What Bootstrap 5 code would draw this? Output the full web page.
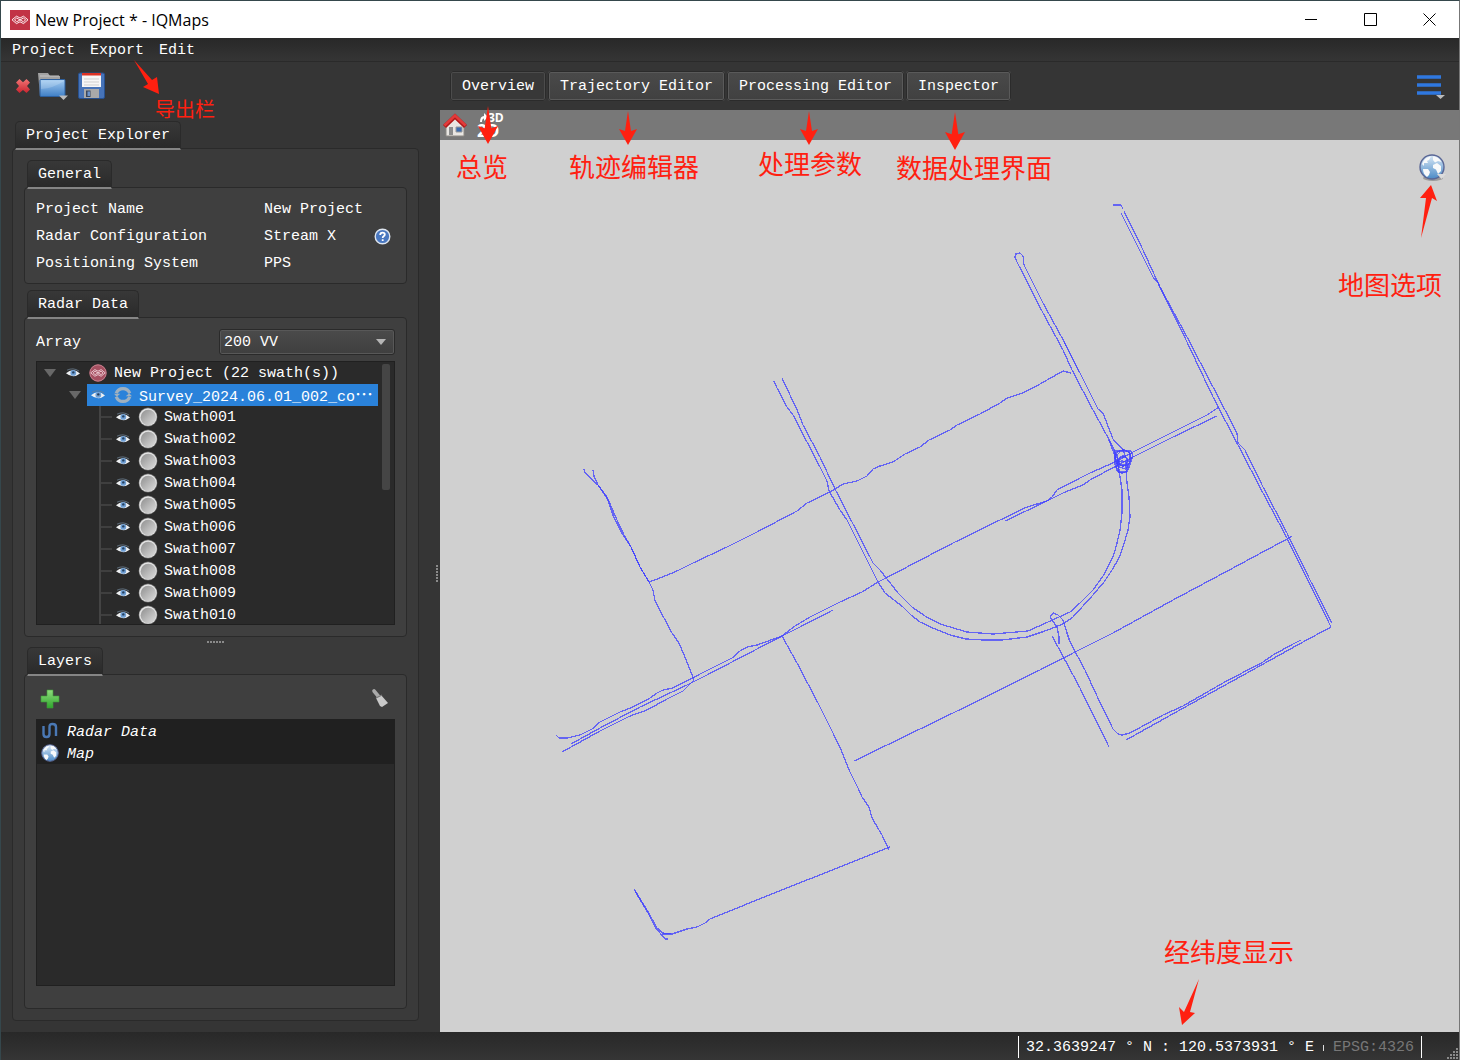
<!DOCTYPE html>
<html lang="en">
<head>
<meta charset="utf-8">
<meta name="viewport" content="width=device-width, initial-scale=1">
<title>New Project * - IQMaps</title>
<link rel="stylesheet" href="https://cdn.jsdelivr.net/npm/bootstrap@5.3.0/dist/css/bootstrap.min.css">
<style>
:root{--edge:#2a2a2a;--ink:#fff;--hot:#ff2010}
body{font-family:"Liberation Mono","Noto Sans CJK SC",monospace;font-size:15px;line-height:22px;color:var(--ink);background:#353535}
button{font:inherit;color:inherit;background:none;border:0;padding:0}
svg{display:block;flex:none}
.app-window{min-height:100vh;border:1px solid #35474c;border-bottom:0;border-right-color:#777}
.title-strip{height:37px;background:#fff;color:#000;font-family:"Open Sans","Noto Sans",sans-serif;font-size:16px;padding-left:9px;gap:5px}
.title-strip button{width:59px;height:37px;display:flex;align-items:center;justify-content:center}
.title-buttons{gap:0}
.menu-strip{height:24px;padding:2px 0 0 11px;gap:15px;background:linear-gradient(#282828,#353535);border-bottom:1px solid #2a2a2a}
.menu-strip a{color:var(--ink);text-decoration:none}
.side-col{width:439px;padding:0 21px 11px 11px}
.tool-strip{height:48px;margin-bottom:11px}
.dock-tab{height:29px;padding:2px 10px 0;margin:0 0 -2px 3px;border:1px solid var(--edge);border-bottom:2px solid #858585;border-radius:5px 5px 0 0;background:linear-gradient(#383838,#2a2a2a);align-self:flex-start;position:relative}
.dock-panel{border:1px solid var(--edge);border-radius:4px;background:#3a3a3a;padding:11px}
.inner-panel{border:1px solid var(--edge);border-radius:4px;background:#3f3f3f;padding:11px}
.info-grid{padding:8px 11px 6px;line-height:27px;margin-bottom:6px}
.info-grid dt{width:228px;font-weight:400}
.info-grid dd{margin:0}
.array-pick{width:176px;position:relative}
.array-pick .form-select{height:26px;padding:2px 4px 0;font:inherit;line-height:22px;color:#fff;background:linear-gradient(#4b4b4b,#3f3f3f);border:1px solid #2a2a2a;border-radius:3px;box-shadow:inset 0 0 0 1px #585858}
.array-pick::after{content:"";position:absolute;right:9px;top:10px;border:5px solid transparent;border-top:6px solid #b5b5b5;border-bottom:0;pointer-events:none}
.array-row label{padding-top:2px}
.swath-tree{height:264px;margin-top:6px;border:1px solid #202020;background:#2a2a2a;overflow:hidden;position:relative}
.swath-tree ul{list-style:none;padding:0}
.tree-row{height:22px;display:flex;align-items:center;white-space:nowrap}
.tree-row .node-name{padding-top:2px}
.tree-row .fold{width:25px;height:22px;display:flex;align-items:center;justify-content:center}
.fold::before{content:"";border:6px solid transparent;border-top:8px solid #686868;border-bottom:0}
.tree-row .eye{width:22px;height:22px;display:flex;align-items:center;justify-content:center}
.tree-row .node-icon{width:28px;margin-right:2px;display:flex;justify-content:center}
.lv-two{margin-left:25px}
.picked{background:#2a82da;width:291px;height:22px;display:flex;align-items:center}
.wide-dots{font-family:"Noto Sans CJK SC",sans-serif;font-size:18px;line-height:18px}
.swath-tree .lv-three{margin:0 0 0 62px}
.lv-three .tree-row{border-left:2px solid #444}
.lv-three .tree-row::before{content:"";width:11px;height:2px;background:#3f3f3f}
.scroll-thumb{position:absolute;right:4px;top:2px;width:8px;height:126px;border-radius:2px;background:#454545}
.grip-h{width:18px;height:10px;margin:0 auto;padding-top:4px}
.grip-h::before{content:"";display:block;height:2px;background:repeating-linear-gradient(90deg,#8a8a8a 0 2px,transparent 2px 3px)}
.grip-v{position:absolute;right:2px;top:503px;width:2px;height:18px;background:repeating-linear-gradient(#8a8a8a 0 2px,transparent 2px 3px)}
.layer-box{border:1px solid #202020;background:#2a2a2a;margin-bottom:11px}
.layer-box li{height:22px;background:#202020;font-style:italic;padding-left:4px;gap:8px}
.view-tabs{height:48px;padding:0 13px 0 10px;gap:2px}
.view-tabs .btn-view{height:30px;padding:1px 12px 0;border-radius:3px;background:linear-gradient(#4a4a4a,#404040);outline:1px solid #2b2b2b;outline-offset:-1px;box-shadow:inset 0 0 0 2px #5a5a5a}
.view-tabs .btn-view.active{background:#383838;box-shadow:inset 0 0 0 2px #4c4c4c}
.view-tools{height:30px;background:#787878;padding-left:2px;gap:9px}
.view-tools svg{overflow:visible}
.map-area{background:#d0d0d0;min-height:600px;position:relative}
.map-area>svg.map-canvas{position:absolute;inset:0;width:100%;height:100%}
.swath-line{fill:none;stroke:#4040ff;stroke-width:1.3;stroke-opacity:.75;shape-rendering:crispEdges}
.globe-btn{position:absolute;right:12px;top:12px}
.status-strip{height:28px;background:linear-gradient(#282828,#353535);padding:2px 37px 0 0;position:relative}
.status-cell{border-left:1px solid #fff;border-right:1px solid #fff;height:22px;padding:2px 7px 0;gap:9px}
.status-tick{width:1px;height:6px;background:#ddd}
.status-epsg{color:#777}
.size-grip{position:absolute;right:0;bottom:0}
.note-label{position:absolute;color:var(--hot);font-family:"Noto Sans CJK SC",sans-serif;font-size:26px;line-height:32px;white-space:nowrap;pointer-events:none;z-index:3}
.note-small{font-size:20px;line-height:24px}
.note-arrow{position:absolute;fill:var(--hot);pointer-events:none;z-index:3}
.arrow-export{left:132px;top:22px}
.arrow-map{right:19px;top:44px}
.arrow-coords{right:258px;bottom:6px}
</style>
<script src="https://cdn.jsdelivr.net/npm/bootstrap@5.3.0/dist/js/bootstrap.bundle.min.js"></script>
</head>
<body>
<svg width="0" height="0" class="position-absolute" aria-hidden="true">
<defs>
<linearGradient id="gGrey" x2="1" y2="1"><stop stop-color="#8e8e8e"/><stop offset="1" stop-color="#dedede"/></linearGradient>
<linearGradient id="gBlue" x2="0" y2="1"><stop stop-color="#a5cdf2"/><stop offset="1" stop-color="#3f7fc6"/></linearGradient>
<linearGradient id="gGlobe" x2="0" y2="1"><stop stop-color="#dbe9f6"/><stop offset="1" stop-color="#4a8ac6"/></linearGradient>
<linearGradient id="gRed" x2="0" y2="1"><stop stop-color="#f27474"/><stop offset="1" stop-color="#c8242f"/></linearGradient>
<linearGradient id="gGreen" x2="0" y2="1"><stop stop-color="#8fdc7d"/><stop offset="1" stop-color="#2fa62d"/></linearGradient>
<symbol id="eye" viewBox="0 0 14 10"><path d="M1 2.2Q7-.8 13 3" fill="none" stroke="#6c7f90" stroke-width=".8"/><path d="M0 5.200Q7-1 14 5.400 7 11 0 5.200Z" fill="#eef0f2"/><circle cx="7.300" cy="4.900" r="2.900" fill="#6f9fd4"/><circle cx="7.300" cy="4.400" r="1.200" fill="#26415f"/></symbol>
<symbol id="disc" viewBox="0 0 20 20"><circle cx="10" cy="10" r="9.400" fill="#6f6f6f"/><circle cx="10" cy="10" r="8.800" fill="#e4e4e4"/><circle cx="10.300" cy="10.500" r="7.700" fill="url(#gGrey)"/></symbol>
<symbol id="knot" viewBox="0 0 20 20"><g fill="none" stroke="currentColor" stroke-width=".9"><path d="M2 9.800 6.500 6.200 10 8 13.500 6.200 18 9.800 13.500 13.600 10 11.800 6.500 13.600ZM4.500 9.800 6.700 8 13.500 11.800 15.600 9.800 13.400 8 6.700 11.800Z"/></g></symbol>
<symbol id="globe" viewBox="0 0 26 26"><circle cx="13" cy="13" r="12" fill="url(#gGlobe)" stroke="#5a6796" stroke-width="1.400"/><path d="M3 10C5 5 8 3 12 2.500L10 6 8 7 9 9 5 9 5 12ZM14 2.500C18 2.500 21 5 22.500 8L19 7 16 8.500 14 6ZM4 15 9 15 11 18 10 21 8 23C5 21 4 18 4 15ZM14 11 18 9 22 12V17L19 20 17 15.500 14 14Z" fill="#f8f9fa"/></symbol>
<symbol id="arrowDown" viewBox="0 0 18 34"><path d="M9 0 12 20 18 18 9 34 0 18 6 20Z"/></symbol>
</defs>
</svg>

<div class="app-window d-flex flex-column position-relative">
<header class="title-strip d-flex align-items-center">
  <svg width="20" height="20" viewBox="0 0 20 20" color="#fff"><rect width="20" height="20" fill="#c23345"/><use href="#knot"/></svg>
  <span class="me-auto">New Project * - IQMaps</span>
  <div class="title-buttons d-flex">
  <button aria-label="Minimize"><svg width="13" height="13"><path d="M0 6.500H12" stroke="#000"/></svg></button>
  <button aria-label="Maximize"><svg width="13" height="13"><path d="M.5.5H12.500V12.500H.5Z" fill="none" stroke="#000"/></svg></button>
  <button aria-label="Close"><svg width="13" height="13"><path d="M.5.5 12.500 12.500M12.500.5.5 12.500" stroke="#000"/></svg></button>
  </div>
</header>
<nav class="menu-strip d-flex align-items-center position-relative">
  <a href="#">Project</a><a href="#">Export</a><a href="#">Edit</a>
  <svg class="note-arrow arrow-export" width="28" height="36"><path d="M1 0 19 20 24 17 26 34 10 27 15 24Z"/></svg>
  <span class="note-label note-small" style="left:154px;top:59px">导出栏</span>
</nav>

<div class="d-flex flex-fill">
<aside class="side-col d-flex flex-column flex-shrink-0 position-relative">
  <div class="tool-strip d-flex align-items-center">
    <button aria-label="Close project" class="ms-1"><svg width="14" height="14" viewBox="0 0 14 14"><path d="M0 3.500 3.500 0 7 3.200 10.500 0 14 3.500 11 7 14 10.500 10.500 14 7 11 3.500 14 0 10.500 3 7Z" fill="url(#gRed)"/></svg></button>
    <button aria-label="Open project" class="ms-2"><svg width="32" height="30" viewBox="0 0 32 30"><path d="M0 2H10L12 5H22V9H4L2 25Z" fill="#a2a2a2"/><path d="M2 5H21" stroke="#c6c6c6"/><rect x="2" y="8.500" width="25" height="17" rx="1" fill="url(#gBlue)" stroke="#2c5f9e"/><path d="M3 18Q16 17 26 10V9.500H3Z" fill="#fff" opacity=".18"/><path d="M21 24.500H30L25.500 29Z" fill="#bbb"/></svg></button>
    <button aria-label="Save project" class="ms-2"><svg width="27" height="28" viewBox="0 0 27 28"><rect x=".5" y="1" width="26" height="25.500" rx="1.500" fill="#4673b8" stroke="#27508e"/><path d="M4 1H23V15H4Z" fill="#f6f6f6"/><path d="M4 1H23V3.500H4Z" fill="#dc3224"/><path d="M6 7H21M6 10H21M6 13H21" stroke="#cfcfcf"/><path d="M6 17H21V26H6Z" fill="#a9a9a9"/><path d="M8 18.500H12.500V25H8Z" fill="#39465c"/><path d="M9.500 19.500H12V24H9.500Z" fill="#6c94cc"/></svg></button>
  </div>
  <button class="dock-tab" id="tabExplorer">Project Explorer</button>
  <section class="dock-panel d-flex flex-column flex-fill" aria-labelledby="tabExplorer">
    <button class="dock-tab">General</button>
    <dl class="inner-panel info-grid">
      <div class="d-flex"><dt>Project Name</dt><dd>New Project</dd></div>
      <div class="d-flex align-items-center"><dt>Radar Configuration</dt><dd class="flex-fill d-flex align-items-center justify-content-between">Stream X
        <button aria-label="Help" class="me-1"><svg width="17" height="17" viewBox="0 0 17 17"><circle cx="8.500" cy="8.500" r="7.300" fill="#4a78c0" stroke="#dfe6f0" stroke-width="1.400"/><path d="M6.200 7Q6.200 4.600 8.500 4.600 10.800 4.600 10.800 6.500 10.800 7.600 9.600 8.300 8.700 8.800 8.700 10M8.700 11.200V13" fill="none" stroke="#fff" stroke-width="1.800"/></svg></button></dd></div>
      <div class="d-flex"><dt>Positioning System</dt><dd>PPS</dd></div>
    </dl>
    <button class="dock-tab">Radar Data</button>
    <section class="inner-panel">
      <div class="array-row d-flex justify-content-between align-items-center">
        <label for="arrayPick">Array</label>
        <div class="array-pick"><select id="arrayPick" class="form-select"><option>200 VV</option></select></div>
      </div>
      <div class="swath-tree">
        <ul class="m-0">
          <li class="tree-row"><button class="fold" aria-label="Collapse"></button><button class="eye" aria-label="Show"><svg width="14" height="10"><use href="#eye"/></svg></button>
            <span class="node-icon"><svg width="18" height="18" viewBox="0 0 20 20" color="#f6dce2"><circle cx="10" cy="10" r="9.600" fill="#a65061"/><circle cx="10" cy="10" r="9" fill="none" stroke="#c48591"/><use href="#knot"/></svg></span><span class="node-name">New Project (22 swath(s))</span></li>
          <li class="tree-row lv-two"><button class="fold" aria-label="Collapse"></button>
            <div class="picked"><button class="eye" aria-label="Show"><svg width="14" height="10"><use href="#eye"/></svg></button>
            <span class="node-icon"><svg width="18" height="18" viewBox="0 0 20 20"><path d="M2.500 8A8 8 0 0 1 17.500 8M17.500 12A8 8 0 0 1 2.500 12" fill="none" stroke="#9fb0bf" stroke-width="3.600"/><path d="M0 8.500H7L3 12ZM20 11.500H13L17 8Z" fill="#9fb0bf"/></svg></span><span class="node-name">Survey_2024.06.01_002_co<span class="wide-dots" lang="zh">⋯</span></span></div></li>
        </ul>
        <ul class="lv-three" id="swaths"></ul>
        <div class="scroll-thumb"></div>
      </div>
    </section>
    <div class="grip-h"></div>
    <button class="dock-tab">Layers</button>
    <section class="inner-panel d-flex flex-column flex-fill">
      <div class="d-flex justify-content-between px-1 pb-2">
        <button aria-label="Add layer"><svg width="20" height="25" viewBox="0 0 20 25"><path d="M7 4H13V10H19V16H13V22H7V16H1V10H7Z" fill="url(#gGreen)" stroke="#3c9a38" stroke-width=".6"/></svg></button>
        <button aria-label="Clear layers"><svg width="20" height="25" viewBox="0 0 20 25"><path d="M3 5 8 11" stroke="#a9a9a9" stroke-width="3.600" stroke-linecap="round"/><path d="M5 12 10 9 17 17 11 21 9 20Z" fill="#c9c9c9"/><path d="M5 12 11 9" stroke="#777" stroke-width="1.200"/></svg></button>
      </div>
      <div class="layer-box flex-fill">
        <ul class="list-unstyled m-0">
          <li class="d-flex align-items-center"><svg width="18" height="18" viewBox="0 0 18 18"><path d="M2.500 4V12Q2.500 15 5.500 15 8.500 15 8.500 12V5Q8.500 2 11.500 2 15 2 15 5V14" fill="none" stroke="#4a78b4" stroke-width="2.400"/></svg><span class="pt-1">Radar Data</span></li>
          <li class="d-flex align-items-center"><svg width="18" height="18"><use href="#globe"/></svg><span class="pt-1">Map</span></li>
        </ul>
      </div>
    </section>
  </section>
  <div class="grip-v"></div>
</aside>

<main class="d-flex flex-column flex-fill position-relative">
  <div class="view-tabs d-flex align-items-center">
    <button class="btn-view active">Overview</button>
    <button class="btn-view">Trajectory Editor</button>
    <button class="btn-view">Processing Editor</button>
    <button class="btn-view">Inspector</button>
    <button class="ms-auto" aria-label="Options"><svg width="30" height="26" viewBox="0 0 30 26"><path d="M1 4H25M1 12H25M1 20H25" stroke="#2f78e0" stroke-width="3.400"/><path d="M20 22H29L24.500 26Z" fill="#bbb"/></svg></button>
  </div>
  <div class="view-tools d-flex align-items-center">
    <button aria-label="Home"><svg width="26" height="26" viewBox="0 0 26 26"><path d="M4 13 13 5 22 13V24H4Z" fill="#e9e6e2" stroke="#8b8883"/><path d="M2.500 14.500 13 4.500 23.500 14.500" fill="none" stroke="#b01818" stroke-width="4.400"/><path d="M2.500 13.500 13 3.500 23.500 13.500" fill="none" stroke="#e23a3a" stroke-width="2.600"/><path d="M7 15H11V23H7Z" fill="#8c8c8c"/><path d="M14 15H20V20H14Z" fill="#3d6cae" stroke="#999"/></svg></button>
    <button aria-label="Toggle 2D and 3D"><svg width="28" height="30" viewBox="0 0 28 30" fill="#fff" font-family="Open Sans" font-weight="700"><text x="11" y="12" font-size="12">3D</text><text x="0" y="27" font-size="17">2D</text><path d="M3 12Q3 6 7 6V3L11 7 7 11V8.500Q5 8.500 5 12Z"/></svg></button>
  </div>
  <div class="map-area flex-fill">
    <svg class="map-canvas" viewBox="440 140 1019 892" role="img" aria-label="Swath trajectories">
      <g class="swath-line">
        <path d="M584 469 585 473 598 485 607 498 612 512 614 518 623 535 631 547 640 567 649 582"/>
        <path d="M593 470 594 476 598 485 607 497 617 520 624 535 631 547 640 567 649 582 653 590 655 601 672 633 679 643 687 662 694 680 683 691 667 699 647 710 630 716 600 731 562 752"/>
        <path d="M649 582 660 578 677 571 693 563 727 547 757 532 797 511 807 503 830 492 843 484 857 481 867 476 873 469 880 466 893 462 905 454 920 447 929 440 950 430 957 425 980 414 1000 403 1007 398 1023 393 1040 384 1063 371 1071 373"/>
        <path d="M774 381 777 388 787 407 793 415 807 442 820 467 827 481 829 491 840 510 847 520 868 562 878 582 885 593 903 607 911 615 920 622 935 629 950 635 966 639 983 640 1002 640 1027 637 1045 631 1063 624 1073 617 1093 595 1104 582 1112 570 1119 558 1123 547 1128 530 1130 517 1129 497 1127 483 1126 465"/>
        <path d="M782 378 798 412 803 425 820 457 835 489 870 557 873 563 880 570 898 593 912 607 925 616 940 624 967 632 993 634 1028 631 1048 622 1070 612 1080 603 1093 590 1103 576 1110 563 1114 554 1117 543 1120 530 1122 513 1122 490 1119 470 1115 456 1109 440"/>
        <path d="M1017 262 1015 257 1016 254 1020 253 1023 256 1024 265 1043 303 1067 347 1098 409 1103 413 1113 439 1123 450 1126 458"/>
        <path d="M1017 262 1043 313 1063 350 1072 370 1093 410 1112 445 1117 457 1119 473"/>
        <path d="M1064 342 1079 372"/>
        <path d="M1113 205H1121L1123 209M1124 211 1143 250 1160 287 1187 337 1213 387 1237 433 1238 443 1245 450 1263 487 1287 533 1310 580 1332 623"/>
        <path d="M1121 213 1153 277 1158 283 1187 342 1213 397 1238 445 1263 493 1287 538 1331 627 1303 642 1247 673 1187 706 1126 740"/>
        <path d="M1301 640 1293 644 1273 655 1263 662 1223 683 1183 706 1163 715 1130 733 1122 735 1118 734 1113 729 1097 696 1085 670 1070 642 1067 633 1063 620 1058 615 1053 613 1050 617 1052 620 1057 627 1059 637 1059 644"/>
        <path d="M1052 636 1058 647 1080 688 1109 747"/>
        <path d="M854 761 953 713 1040 670 1075 652 1113 633 1173 600 1233 568 1287 539 1292 536"/>
        <path d="M1219 407 1207 415 1173 432 1133 452 1115 462 1090 473 1080 478 1057 490 1052 497 1047 501 1027 507 1000 520 953 543 886 578 878 582 862 592 840 602 830 607 810 617 795 626 782 636 757 645 747 647 740 651 732 658 700 674 673 688 663 690 657 693 650 698 633 707 620 712 600 722 592 729 580 735 567 738 559 738 556 735"/>
        <path d="M1217 416 1173 437 1133 457 1090 480 1083 485 1063 493 1047 501 1005 521"/>
        <path d="M833 610 800 627 782 636 707 675 687 685 640 707 600 728 571 744"/>
        <path d="M782 636 797 663 818 703 833 733 842 752 850 772 859 790 862 797 869 807 872 818 882 835 889 850"/>
        <path d="M890 847 860 859 807 880 747 904 710 919 705 923 697 927 687 929 672 934 663 933 657 928 647 910 634 889"/>
        <path d="M635 891 648 913 655 927 665 939 668 939M662 934H671"/>
        <path d="M1115 451H1131L1133 456 1130 465 1127 472H1119L1115 465ZM1117 455 1123 449 1130 453V462L1126 469 1119 467Z"/>
        <circle cx="1123" cy="461" r="4"/><circle cx="1123" cy="461" r="5"/><circle cx="1123" cy="458" r="8"/><circle cx="1122" cy="467" r="6"/>
      </g>
    </svg>
    <button class="globe-btn" aria-label="Map options"><svg width="30" height="30" viewBox="0 0 30 30"><ellipse cx="16" cy="26" rx="10" ry="3" fill="#777" opacity=".6"/><use href="#globe" x="2" y="2" width="26" height="26"/><path d="M20 22H29L24.500 27Z" fill="#dcdcdc"/></svg></button>
    <svg class="note-arrow arrow-map" width="20" height="56"><path d="M1 54 6 14 0 14 11 1 17 17 12 14Z"/></svg>
    <span class="note-label" style="right:17px;top:128px">地图选项</span>
    <svg class="note-arrow arrow-coords" width="24" height="48"><path d="M22 1 13 34 18 35 5 47 2 29 7 34Z"/></svg>
    <span class="note-label" style="right:165px;bottom:65px">经纬度显示</span>
  </div>
  <svg class="note-arrow" style="left:38px;top:44px" width="20" height="38"><use href="#arrowDown"/></svg>
  <svg class="note-arrow" style="left:179px;top:49px" width="18" height="34"><use href="#arrowDown"/></svg>
  <svg class="note-arrow" style="left:360px;top:49px" width="18" height="34"><use href="#arrowDown"/></svg>
  <svg class="note-arrow" style="left:505px;top:49px" width="20" height="40"><use href="#arrowDown"/></svg>
  <span class="note-label" style="left:16px;top:88px">总览</span>
  <span class="note-label" style="left:129px;top:88px">轨迹编辑器</span>
  <span class="note-label" style="left:318px;top:85px">处理参数</span>
  <span class="note-label" style="left:456px;top:89px">数据处理界面</span>
</main>
</div>

<footer class="status-strip d-flex align-items-center justify-content-end">
  <div class="status-cell d-flex align-items-center"><span>32.3639247 ° N : 120.5373931 ° E</span><span class="status-tick"></span><span class="status-epsg">EPSG:4326</span></div>
  <svg class="size-grip" width="12" height="12"><path fill="#8a8a8a" d="M9 0h2v2H9zM6 3h2v2H6zM9 3h2v2H9zM3 6h2v2H3zM6 6h2v2H6zM9 6h2v2H9zM0 9h2v2H0zM3 9h2v2H3zM6 9h2v2H6zM9 9h2v2H9z"/></svg>
</footer>
</div>
<script>
const list = document.getElementById('swaths');
for (let i = 1; i <= 10; i++) {
  list.insertAdjacentHTML('beforeend', `<li class="tree-row"><button class="eye" aria-label="Show"><svg width="14" height="10"><use href="#eye"/></svg></button><span class="node-icon"><svg width="20" height="20"><use href="#disc"/></svg></span><span class="node-name">Swath${String(i).padStart(3, '0')}</span></li>`);
}
</script>
</body>
</html>
